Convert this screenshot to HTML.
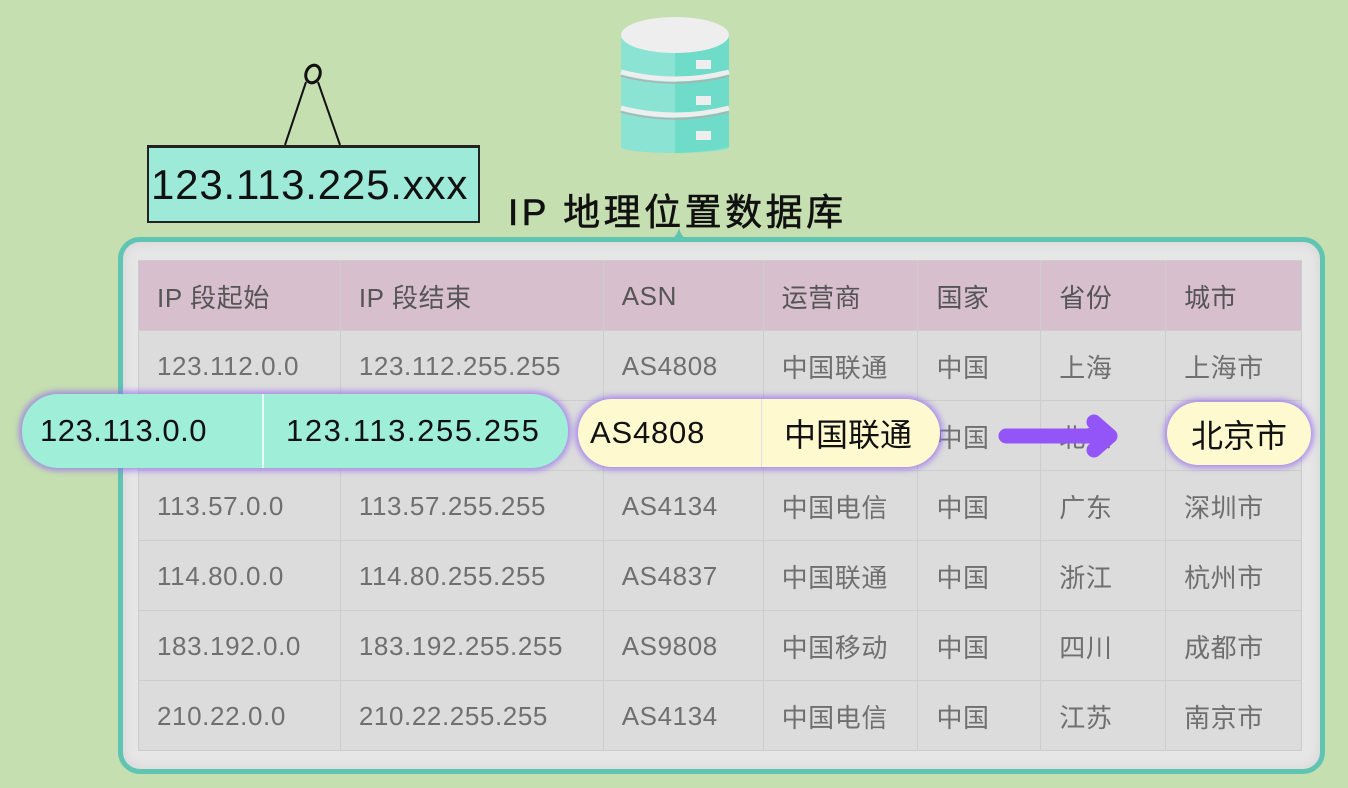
<!DOCTYPE html>
<html><head><meta charset="utf-8"><style>
*{margin:0;padding:0;box-sizing:border-box}
body{width:1348px;height:788px;overflow:hidden;background:#c6dfb0;font-family:"Liberation Sans","Noto Sans CJK SC",sans-serif;position:relative}
.a{position:absolute}
.panel{left:118px;top:237px;width:1207px;height:537px;border:5px solid #5fc4b2;border-radius:22px;background:#e6e6e6;box-shadow:inset 0 0 12px rgba(0,0,0,.08)}
table{position:absolute;left:138px;top:260px;border-collapse:collapse;background:#dcdcdc;width:1164px}
td{height:70px;border:1.5px solid #cdcdcd;color:#6f6f6f;font-size:26px;letter-spacing:.6px;padding-left:18px;padding-top:2px;vertical-align:middle;white-space:nowrap}
tr.h td{background:#d8bfcd;color:#555}
.pill{border-radius:36px;box-shadow:0 0 6px 3px rgba(150,110,240,.7);display:flex;align-items:center;font-size:31px;color:#111}
</style></head><body>
<svg class="a" style="left:0;top:0" width="760" height="240">
<path d="M285 145 L306 82 M340 145 L318 82" stroke="#111" stroke-width="2" fill="none"/>
<ellipse cx="313" cy="74" rx="7" ry="9" stroke="#111" stroke-width="3" fill="none" transform="rotate(20 313 74)"/>
<g>
<rect x="621" y="35" width="108" height="112" fill="#8ae3d3"/>
<rect x="675" y="35" width="54" height="112" fill="#6edcc8"/>
<ellipse cx="675" cy="147" rx="54" ry="6" fill="#8ae3d3"/>
<path d="M675 141 V153 Q710 152 729 147 V141Z" fill="#6edcc8"/>
<path d="M621 72 Q675 86 729 72 M621 108 Q675 122 729 108" stroke="#eee" stroke-width="5" fill="none"/>
<path d="M621 76 Q675 90 729 76 M621 112 Q675 126 729 112" stroke="#b0b0b0" stroke-width="1.5" fill="none"/>
<ellipse cx="675" cy="35" rx="54" ry="18" fill="#eeeeee"/>
<rect x="696" y="60" width="15" height="9" fill="#eee"/><rect x="696" y="96" width="15" height="9" fill="#eee"/><rect x="696" y="131" width="15" height="9" fill="#eee"/>
</g>
</svg>
<div class="a" style="left:147px;top:145px;width:333px;height:78px;background:#9eead8;border:2.5px solid #222;border-top-width:3px;font-size:42px;letter-spacing:.8px;color:#111;line-height:74px;padding-left:2px">123.113.225.xxx</div>
<div class="a" style="left:508px;top:182px;font-size:37px;color:#111;letter-spacing:3.5px;-webkit-text-stroke:.6px #111">IP 地理位置数据库</div>
<div class="a panel"></div>
<svg class="a" style="left:664px;top:226px" width="30" height="16"><path d="M0 16 Q12 14 15 2 Q18 14 30 16Z" fill="#5fc4b2"/></svg>
<table>
<colgroup><col style="width:202px"><col style="width:263px"><col style="width:160px"><col style="width:155px"><col style="width:123px"><col style="width:125px"><col style="width:136px"></colgroup>
<tr class="h"><td>IP 段起始</td><td>IP 段结束</td><td>ASN</td><td>运营商</td><td>国家</td><td>省份</td><td>城市</td></tr>
<tr><td>123.112.0.0</td><td>123.112.255.255</td><td>AS4808</td><td>中国联通</td><td>中国</td><td>上海</td><td>上海市</td></tr>
<tr><td>123.113.0.0</td><td>123.113.255.255</td><td>AS4808</td><td>中国联通</td><td>中国</td><td>北京</td><td>北京市</td></tr>
<tr><td>113.57.0.0</td><td>113.57.255.255</td><td>AS4134</td><td>中国电信</td><td>中国</td><td>广东</td><td>深圳市</td></tr>
<tr><td>114.80.0.0</td><td>114.80.255.255</td><td>AS4837</td><td>中国联通</td><td>中国</td><td>浙江</td><td>杭州市</td></tr>
<tr><td>183.192.0.0</td><td>183.192.255.255</td><td>AS9808</td><td>中国移动</td><td>中国</td><td>四川</td><td>成都市</td></tr>
<tr><td>210.22.0.0</td><td>210.22.255.255</td><td>AS4134</td><td>中国电信</td><td>中国</td><td>江苏</td><td>南京市</td></tr>
</table>
<div class="a pill" style="left:22px;top:394px;width:546px;height:74px;background:#9eeed8">
<span style="width:242px;padding-left:18px;border-right:2px solid #e8f8f3;height:100%;display:flex;align-items:center;letter-spacing:.5px">123.113.0.0</span>
<span style="padding-left:22px;letter-spacing:1.6px">123.113.255.255</span></div>
<div class="a pill" style="left:578px;top:399px;width:362px;height:68px;background:#fff9d0">
<span style="width:184px;padding-left:12px;border-right:1.5px solid #dde;height:100%;display:flex;align-items:center;letter-spacing:.8px">AS4808</span>
<span style="padding-left:22px;font-size:32px">中国联通</span></div>
<svg class="a" style="left:998px;top:414px" width="130" height="46"><path d="M8 22 H112 M96 8 L112 22 L96 36" stroke="#9455f8" stroke-width="15" stroke-linecap="round" stroke-linejoin="round" fill="none"/></svg>
<div class="a pill" style="left:1167px;top:402px;width:144px;height:63px;background:#fff9d0;justify-content:center;font-size:32px">北京市</div>
</body></html>
